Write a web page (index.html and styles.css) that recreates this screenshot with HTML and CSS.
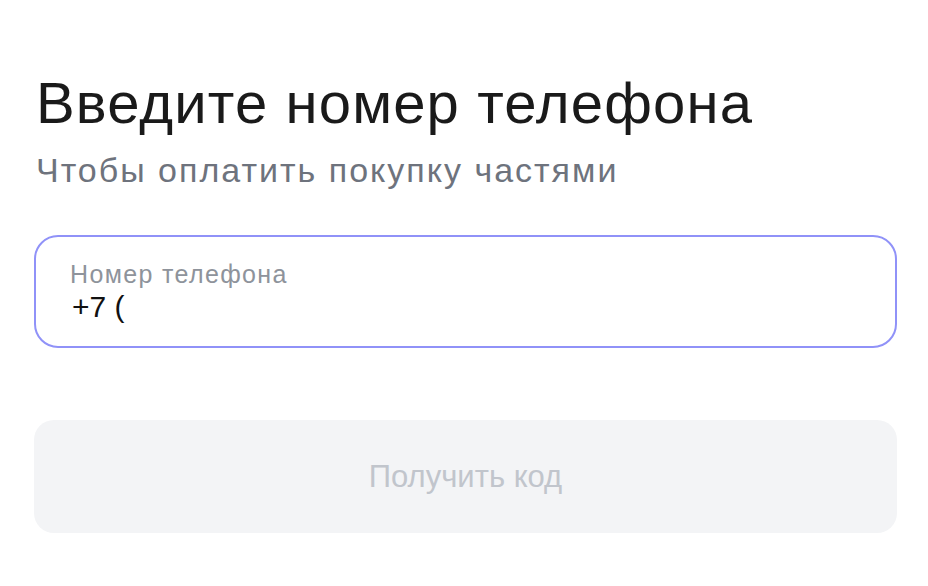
FILE: index.html
```html
<!DOCTYPE html>
<html lang="ru">
<head>
<meta charset="utf-8">
<link rel="stylesheet" href="styles.css">
</head>
<body>
<main class="page">
  <h1 class="title">Введите номер телефона</h1>
  <p class="subtitle">Чтобы оплатить покупку частями</p>
  <label class="field">
    <span class="field-label">Номер телефона</span>
    <span class="field-value">+7 (</span>
  </label>
  <button class="btn" type="button">Получить код</button>
</main>
</body>
</html>
```
FILE: styles.css
```css
html, body {
  margin: 0;
  padding: 0;
  background: #ffffff;
}
body {
  font-family: "Liberation Sans", Arial, sans-serif;
}
.page {
  width: 863px;
  padding: 71px 0 0 34px;
  display: flex;
  flex-direction: column;
}
.title {
  margin: 0 0 0 2px;
  font-size: 58px;
  font-weight: 400;
  line-height: 64px;
  letter-spacing: 1.15px;
  color: #1a1a1a;
}
.subtitle {
  margin: 15px 0 0 2px;
  font-size: 34px;
  line-height: 40px;
  letter-spacing: 2px;
  color: #6e737d;
}
.field {
  margin-top: 45px;
  box-sizing: border-box;
  height: 113px;
  border: 2px solid #9092f8;
  border-radius: 24px;
  padding: 22px 34px 0;
  display: flex;
  flex-direction: column;
}
.field-label {
  font-size: 25px;
  line-height: 30px;
  letter-spacing: 1.35px;
  color: #8e939b;
}
.field-value {
  margin-top: 2px;
  padding-left: 2px;
  font-size: 30px;
  line-height: 32px;
  letter-spacing: 0;
  color: #111111;
}
.btn {
  margin-top: 72px;
  height: 113px;
  border: none;
  border-radius: 20px;
  background: #f3f4f6;
  font-family: inherit;
  font-size: 31px;
  color: #c1c5cc;
  padding: 0;
}
```
